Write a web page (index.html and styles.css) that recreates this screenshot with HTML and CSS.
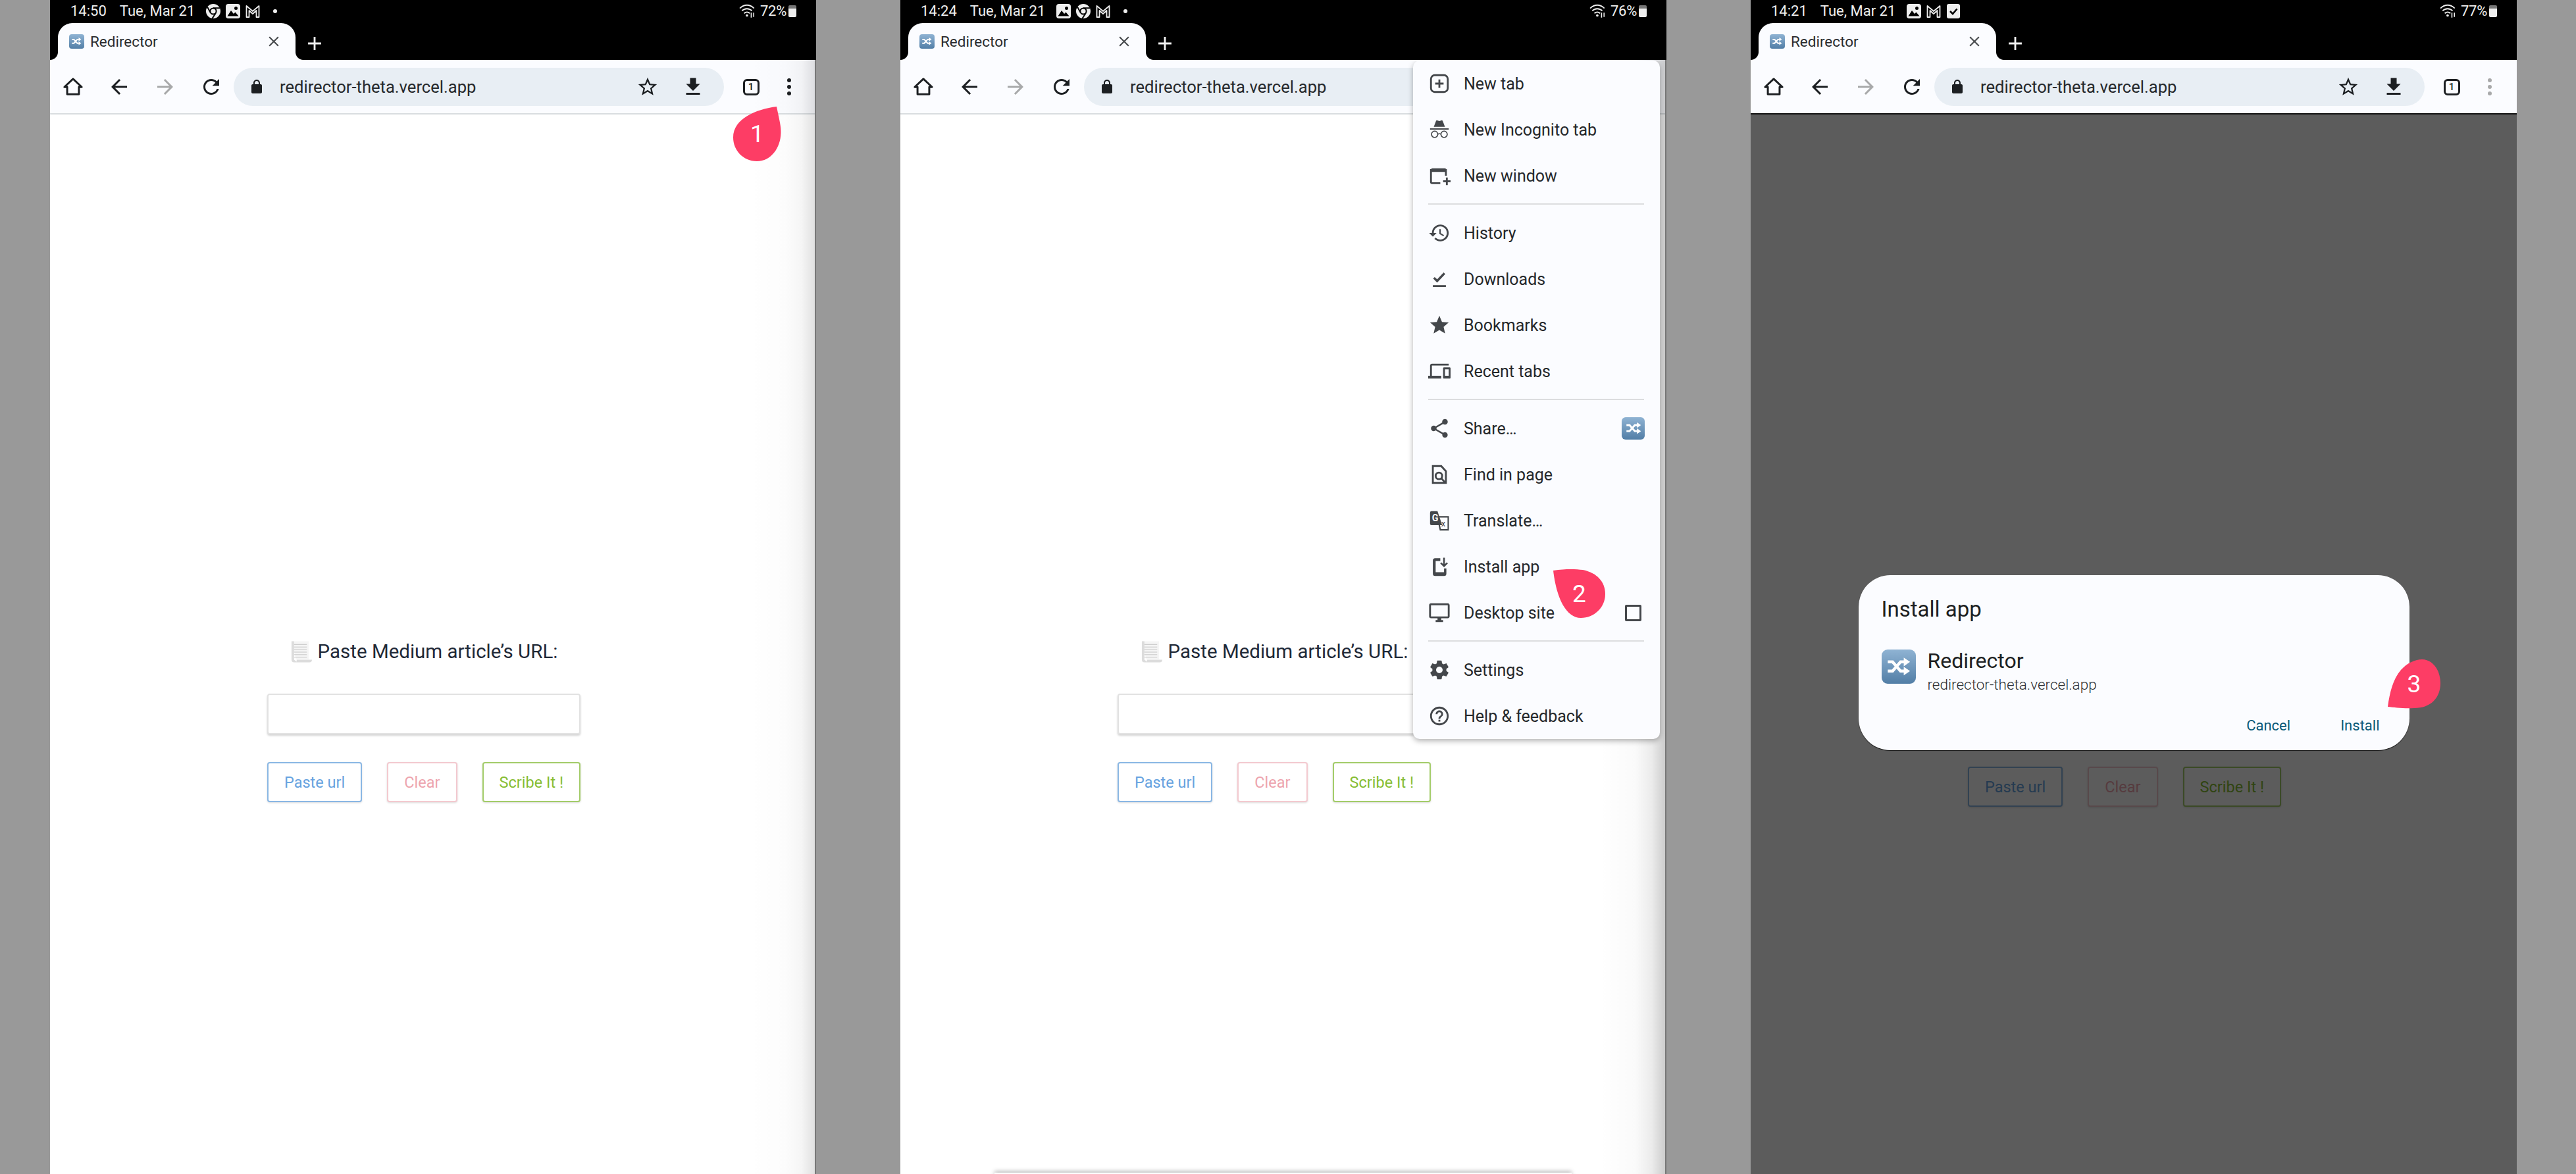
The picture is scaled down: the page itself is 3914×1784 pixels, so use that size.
FILE: index.html
```html
<!DOCTYPE html>
<html lang="en">
<head>
  <meta charset="UTF-8">
  <title>Redirector install steps</title>
  <link rel="stylesheet" href="styles.css">
</head>
<body>
  <!-- icons used by all three screens -->
  <svg class="sprite" xmlns="http://www.w3.org/2000/svg">
    <symbol id="i-home" viewBox="0 0 24 24"><path d="M12 3.500 2.700 12.200h3V20h12.600v-7.800h3z" fill="none" stroke="currentColor" stroke-width="2.100" stroke-linejoin="round"/></symbol>
    <symbol id="i-back" viewBox="0 0 24 24"><path d="M20 11H7.830l5.590-5.590L12 4l-8 8 8 8 1.410-1.410L7.830 13H20v-2z"/></symbol>
    <symbol id="i-forward" viewBox="0 0 24 24"><path d="M12 4l-1.410 1.410L16.170 11H4v2h12.170l-5.580 5.590L12 20l8-8z"/></symbol>
    <symbol id="i-reload" viewBox="0 0 24 24"><path d="M17.650 6.350C16.200 4.900 14.210 4 12 4c-4.420 0-7.990 3.580-7.990 8s3.570 8 7.990 8c3.730 0 6.840-2.550 7.730-6h-2.080c-.82 2.330-3.040 4-5.650 4-3.310 0-6-2.690-6-6s2.690-6 6-6c1.660 0 3.140.69 4.220 1.780L13 11h7V4l-2.350 2.350z"/></symbol>
    <symbol id="i-lock" viewBox="0 0 24 24"><path d="M18 8h-1V6c0-2.760-2.240-5-5-5S7 3.240 7 6v2H6c-1.100 0-2 .9-2 2v10c0 1.100.9 2 2 2h12c1.100 0 2-.9 2-2V10c0-1.100-.9-2-2-2zM9 6c0-1.660 1.340-3 3-3s3 1.340 3 3v2H9V6z"/></symbol>
    <symbol id="i-star-line" viewBox="0 0 24 24"><path d="M22 9.240l-7.190-.62L12 2 9.190 8.630 2 9.240l5.460 4.730L5.820 21 12 17.270 18.180 21l-1.630-7.030L22 9.240zM12 15.400l-3.760 2.270 1-4.280-3.320-2.880 4.380-.38L12 6.100l1.710 4.040 4.380.38-3.320 2.880 1 4.280L12 15.400z"/></symbol>
    <symbol id="i-download" viewBox="0 0 24 24"><path d="M19 9h-4V3H9v6H5l7 7 7-7zM5 18v2h14v-2H5z"/></symbol>
    <symbol id="i-close" viewBox="0 0 24 24"><path d="M19 6.410L17.590 5 12 10.590 6.410 5 5 6.410 10.590 12 5 17.590 6.410 19 12 13.410 17.590 19 19 17.590 13.410 12z"/></symbol>
    <symbol id="i-plus" viewBox="0 0 24 24"><path d="M19 13h-6v6h-2v-6H5v-2h6V5h2v6h6v2z"/></symbol>
    <symbol id="i-shuffle" viewBox="0 0 24 24"><path d="M2.500 8h4.200l7 8h3.300M2.500 16h4.200l7-8h3.300" fill="none" stroke="#fff" stroke-width="2.600"/><path d="M16.500 4.200 22 8l-5.500 3.800zM16.500 12.200 22 16l-5.500 3.800z" fill="#fff"/></symbol>

    <symbol id="s-chrome" viewBox="0 0 24 24"><circle cx="12" cy="12" r="11" fill="#eee"/><circle cx="12" cy="12" r="4.600" fill="#eee" stroke="#000" stroke-width="2"/><path d="M12 7.200h10M8 14.500 3 5.500M15.800 15 10.500 23" stroke="#000" stroke-width="2" fill="none"/></symbol>
    <symbol id="s-image" viewBox="0 0 24 24"><rect x="1" y="1" width="22" height="22" rx="4" fill="#eee"/><circle cx="16.500" cy="7.500" r="2.500"/><path d="M3.500 19.500 9 11l4 5 2.500-2.500 5 6z"/></symbol>
    <symbol id="s-gmail" viewBox="0 0 24 24"><path d="M2.500 21V4l9.500 8 9.500-8v17h-4V11l-5.500 5-5.500-5v10z" fill="none" stroke="#eee" stroke-width="1.800" stroke-linejoin="round"/></symbol>
    <symbol id="s-check" viewBox="0 0 24 24"><rect x="2" y="1" width="20" height="22" rx="3" fill="#eee"/><path d="m7 12 4 4 6.500-7.500" fill="none" stroke="#000" stroke-width="2.600"/></symbol>
    <symbol id="s-wifi" viewBox="0 0 24 24"><g fill="none" stroke="#eee" stroke-width="1.700"><path d="M1 8c6-6 14-6 20 0M4 11.500c4-4 10-4 14 0M7 15c2.500-2.200 5.500-2.200 8 0"/></g><circle cx="11" cy="18" r="1.700" fill="#eee"/><path d="M17 14v7M20.500 20v-6" stroke="#eee" stroke-width="1.500"/></symbol>

    <symbol id="m-newtab" viewBox="0 0 24 24"><rect x="3" y="3" width="18" height="18" rx="4" fill="none" stroke="currentColor" stroke-width="2"/><path d="M12 7.500v9M7.500 12h9" stroke="currentColor" stroke-width="2"/></symbol>
    <symbol id="m-incognito" viewBox="0 0 24 24"><path d="M17.060 13c-1.860 0-3.420 1.330-3.820 3.100-.95-.41-1.820-.3-2.480-.01C10.350 14.310 8.790 13 6.940 13 4.770 13 3 14.790 3 17s1.770 4 3.940 4c2.060 0 3.740-1.620 3.900-3.680.34-.24 1.230-.69 2.320.02.18 2.050 1.840 3.660 3.900 3.660 2.170 0 3.940-1.790 3.940-4s-1.770-4-3.940-4zM6.940 19.860c-1.560 0-2.810-1.280-2.810-2.860s1.260-2.860 2.810-2.860c1.560 0 2.810 1.280 2.810 2.860s-1.250 2.860-2.810 2.860zm10.120 0c-1.560 0-2.810-1.280-2.810-2.860s1.250-2.860 2.810-2.860 2.820 1.280 2.820 2.860-1.270 2.860-2.820 2.860zM22 10.500H2V12h20v-1.500zm-6.470-7.870c-.22-.49-.78-.75-1.310-.58L12 2.790l-2.230-.74-.05-.01c-.53-.15-1.090.13-1.290.64L6 9h12l-2.440-6.320-.03-.05z"/></symbol>
    <symbol id="m-window" viewBox="0 0 24 24"><path d="M13 20H4.500A1.500 1.500 0 0 1 3 18.500V6h16v6" fill="none" stroke="currentColor" stroke-width="2"/><path d="M3 5.500A1.500 1.500 0 0 1 4.500 4H18a1 1 0 0 1 1 1v3H3zM19 14h2v3h3v2h-3v3h-2v-3h-3v-2h3z"/></symbol>
    <symbol id="m-history" viewBox="0 0 24 24"><path d="M13 3c-4.970 0-9 4.030-9 9H1l3.890 3.890.07.14L9 12H6c0-3.870 3.130-7 7-7s7 3.130 7 7-3.130 7-7 7c-1.930 0-3.680-.79-4.940-2.060l-1.420 1.420C8.270 19.990 10.510 21 13 21c4.970 0 9-4.030 9-9s-4.030-9-9-9zm-1 5v5l4.280 2.540.72-1.210-3.500-2.080V8H12z"/></symbol>
    <symbol id="m-done" viewBox="0 0 24 24"><path d="M5 18.500h14v2H5zM9.600 15.800 5.300 11.500l1.700-1.700 2.600 2.600 7-7.400 1.700 1.700z"/></symbol>
    <symbol id="m-star" viewBox="0 0 24 24"><path d="M12 17.270L18.180 21l-1.640-7.030L22 9.240l-7.190-.61L12 2 9.190 8.630 2 9.240l5.460 4.730L5.820 21z"/></symbol>
    <symbol id="m-devices" viewBox="0 0 24 24"><path d="M4 6h18V4H4c-1.100 0-2 .9-2 2v11H0v3h14v-3H4V6zm19 2h-6c-.55 0-1 .45-1 1v10c0 .55.45 1 1 1h6c.55 0 1-.45 1-1V9c0-.55-.45-1-1-1zm-1 9h-4v-7h4v7z"/></symbol>
    <symbol id="m-share" viewBox="0 0 24 24"><path d="M18 16.080c-.76 0-1.440.3-1.960.77L8.910 12.700c.05-.23.09-.46.09-.7s-.04-.47-.09-.7l7.050-4.110c.54.5 1.250.81 2.040.81 1.660 0 3-1.340 3-3s-1.340-3-3-3-3 1.340-3 3c0 .24.04.47.09.7L8.040 9.810C7.500 9.310 6.790 9 6 9c-1.660 0-3 1.340-3 3s1.340 3 3 3c.79 0 1.500-.31 2.040-.81l7.120 4.160c-.05.21-.08.43-.08.650 0 1.610 1.310 2.920 2.920 2.920 1.610 0 2.920-1.310 2.920-2.920s-1.310-2.920-2.920-2.920z"/></symbol>
    <symbol id="m-find" viewBox="0 0 24 24"><g fill="none" stroke="currentColor" stroke-width="2"><path d="M5 3h9l5 5.500V21H5z"/><circle cx="11.500" cy="13.500" r="3.500"/><path d="m14 16 4 4.500"/></g></symbol>
    <symbol id="m-install" viewBox="0 0 24 24"><path d="M5 5.500A2.500 2.500 0 0 1 7.500 3H13v3H8v12h9v-4h2.500v5.500A2.500 2.500 0 0 1 17 22H7.500A2.500 2.500 0 0 1 5 19.500z"/><path d="M17 2.500v9M13.500 8l3.500 3.500L20.500 8" fill="none" stroke="currentColor" stroke-width="1.800"/></symbol>
    <symbol id="m-desktop" viewBox="0 0 24 24"><path d="M21 2H3c-1.100 0-2 .9-2 2v12c0 1.100.9 2 2 2h7v2H8v2h8v-2h-2v-2h7c1.100 0 2-.9 2-2V4c0-1.100-.9-2-2-2zm0 14H3V4h18v12z"/></symbol>
    <symbol id="m-settings" viewBox="0 0 24 24"><path d="M19.430 12.980c.04-.32.07-.64.07-.98s-.03-.66-.07-.98l2.110-1.650c.19-.15.24-.42.12-.64l-2-3.460c-.12-.22-.39-.3-.61-.22l-2.490 1c-.52-.4-1.080-.73-1.690-.98l-.38-2.650C14.460 2.180 14.250 2 14 2h-4c-.25 0-.46.18-.49.42l-.38 2.650c-.61.25-1.170.59-1.690.98l-2.490-1c-.23-.09-.49 0-.61.22l-2 3.460c-.13.22-.07.49.12.64l2.110 1.650c-.04.32-.07.65-.07.98s.03.66.07.98l-2.110 1.650c-.19.15-.24.42-.12.64l2 3.460c.12.22.39.3.61.22l2.490-1c.52.4 1.080.73 1.690.98l.38 2.650c.03.24.24.42.49.42h4c.25 0 .46-.18.49-.42l.38-2.650c.61-.25 1.170-.59 1.690-.98l2.490 1c.23.09.49 0 .61-.22l2-3.460c.12-.22.07-.49-.12-.64l-2.110-1.650zM12 15.500c-1.930 0-3.500-1.570-3.500-3.500s1.570-3.500 3.500-3.500 3.500 1.570 3.500 3.500-1.570 3.500-3.500 3.500z"/></symbol>
    <symbol id="m-help" viewBox="0 0 24 24"><path d="M11 18h2v-2h-2v2zm1-16C6.480 2 2 6.480 2 12s4.480 10 10 10 10-4.480 10-10S17.520 2 12 2zm0 18c-4.410 0-8-3.590-8-8s3.590-8 8-8 8 3.590 8 8-3.590 8-8 8zm0-14c-2.210 0-4 1.790-4 4h2c0-1.100.9-2 2-2s2 .9 2 2c0 2-3 1.750-3 5h2c0-2.250 3-2.500 3-5 0-2.210-1.790-4-4-4z"/></symbol>

    <symbol id="e-scroll" viewBox="0 0 34 36"><path d="M2 2h27v28H9z" fill="#f5f5f5"/><path d="M2 2v29a4 4 0 0 0 4 4h24a4 4 0 0 0 4-4H10v3L6 31V2z" fill="#dcdcdc"/><path d="M6 7h20M6 11h20M6 15h20M6 19h20M6 23h20M6 27h20" stroke="#c4c4c4" stroke-width="1"/></symbol>
  </svg>

  <!-- step 1 -->
  <section class="phone phone--lit phone--faint">
    <header class="chrome-top">
      <div class="status">
        <span class="status-time">14:50</span>
        <span class="status-date">Tue, Mar 21</span>
        <svg class="status-icon"><use href="#s-chrome"/></svg>
        <svg class="status-icon"><use href="#s-image"/></svg>
        <svg class="status-icon"><use href="#s-gmail"/></svg>
        <span class="status-dot"></span>
        <div class="status-right">
          <svg class="status-wifi"><use href="#s-wifi"/></svg>
          <span class="status-pct">72%</span>
          <span class="battery"></span>
        </div>
      </div>
      <div class="tabstrip">
        <div class="tab">
          <span class="app-icon app-icon--fav"><svg><use href="#i-shuffle"/></svg></span>
          <span class="tab-title">Redirector</span>
          <svg class="tab-close"><use href="#i-close"/></svg>
        </div>
        <svg class="tab-new"><use href="#i-plus"/></svg>
      </div>
    </header>
    <nav class="toolbar">
      <span class="tool"><svg class="ico ico-home"><use href="#i-home"/></svg></span>
      <span class="tool"><svg class="ico"><use href="#i-back"/></svg></span>
      <span class="tool tool--off"><svg class="ico"><use href="#i-forward"/></svg></span>
      <span class="tool"><svg class="ico"><use href="#i-reload"/></svg></span>
      <div class="omnibox">
        <svg class="ico-lock"><use href="#i-lock"/></svg>
        <span class="url">redirector-theta.vercel.app</span>
        <svg class="ico-star"><use href="#i-star-line"/></svg>
        <svg class="ico"><use href="#i-download"/></svg>
      </div>
      <span class="tool tool--end"><span class="tab-count">1</span></span>
      <span class="tool tool--end"><span class="dots"><i></i><i></i><i></i></span></span>
    </nav>
    <main class="page">
      <form class="form">
        <label class="form-label"><svg class="scroll"><use href="#e-scroll"/></svg> Paste Medium article’s URL:</label>
        <input class="form-input" type="text">
        <div class="form-btns">
          <button class="btn btn--blue" type="button">Paste url</button>
          <button class="btn btn--red" type="button">Clear</button>
          <button class="btn btn--green" type="button">Scribe It !</button>
        </div>
      </form>
    </main>
    <div class="pin pin--one">
      <svg viewBox="0 0 73 83"><path d="M66 0C70 20 73 30 72.500 40 72 62 58 83 36 83 15 83 0 66 0 47 0 18 35 4 66 0z"/></svg>
      <span>1</span>
    </div>
  </section>

  <!-- step 2 -->
  <section class="phone phone--lit">
    <header class="chrome-top">
      <div class="status">
        <span class="status-time">14:24</span>
        <span class="status-date">Tue, Mar 21</span>
        <svg class="status-icon"><use href="#s-image"/></svg>
        <svg class="status-icon"><use href="#s-chrome"/></svg>
        <svg class="status-icon"><use href="#s-gmail"/></svg>
        <span class="status-dot"></span>
        <div class="status-right">
          <svg class="status-wifi"><use href="#s-wifi"/></svg>
          <span class="status-pct">76%</span>
          <span class="battery"></span>
        </div>
      </div>
      <div class="tabstrip">
        <div class="tab">
          <span class="app-icon app-icon--fav"><svg><use href="#i-shuffle"/></svg></span>
          <span class="tab-title">Redirector</span>
          <svg class="tab-close"><use href="#i-close"/></svg>
        </div>
        <svg class="tab-new"><use href="#i-plus"/></svg>
      </div>
    </header>
    <nav class="toolbar">
      <span class="tool"><svg class="ico ico-home"><use href="#i-home"/></svg></span>
      <span class="tool"><svg class="ico"><use href="#i-back"/></svg></span>
      <span class="tool tool--off"><svg class="ico"><use href="#i-forward"/></svg></span>
      <span class="tool"><svg class="ico"><use href="#i-reload"/></svg></span>
      <div class="omnibox">
        <svg class="ico-lock"><use href="#i-lock"/></svg>
        <span class="url">redirector-theta.vercel.app</span>
      </div>
    </nav>
    <main class="page">
      <form class="form">
        <label class="form-label"><svg class="scroll"><use href="#e-scroll"/></svg> Paste Medium article’s URL:</label>
        <input class="form-input" type="text">
        <div class="form-btns">
          <button class="btn btn--blue" type="button">Paste url</button>
          <button class="btn btn--red" type="button">Clear</button>
          <button class="btn btn--green" type="button">Scribe It !</button>
        </div>
      </form>
      <div class="sheet-edge"></div>
    </main>
    <ul class="menu">
      <li class="menu-item"><svg class="menu-ico"><use href="#m-newtab"/></svg>New tab</li>
      <li class="menu-item"><svg class="menu-ico"><use href="#m-incognito"/></svg>New Incognito tab</li>
      <li class="menu-item"><svg class="menu-ico"><use href="#m-window"/></svg>New window</li>
      <li class="menu-sep"></li>
      <li class="menu-item"><svg class="menu-ico"><use href="#m-history"/></svg>History</li>
      <li class="menu-item"><svg class="menu-ico"><use href="#m-done"/></svg>Downloads</li>
      <li class="menu-item"><svg class="menu-ico"><use href="#m-star"/></svg>Bookmarks</li>
      <li class="menu-item"><svg class="menu-ico"><use href="#m-devices"/></svg>Recent tabs</li>
      <li class="menu-sep"></li>
      <li class="menu-item"><svg class="menu-ico"><use href="#m-share"/></svg>Share…<span class="app-icon app-icon--menu"><svg><use href="#i-shuffle"/></svg></span></li>
      <li class="menu-item"><svg class="menu-ico"><use href="#m-find"/></svg>Find in page</li>
      <li class="menu-item">
        <svg class="menu-ico" viewBox="0 0 24 24">
          <path d="M10 8h11.500v14H13z" fill="none" stroke="currentColor" stroke-width="1.500"/>
          <path d="M3.500 2H10l5 15H3.500A1.500 1.500 0 0 1 2 15.500v-12A1.500 1.500 0 0 1 3.500 2z"/>
          <text x="4" y="13" class="glyph-g">G</text>
          <text x="14" y="18.500" class="glyph-x">x</text>
        </svg>Translate…
      </li>
      <li class="menu-item"><svg class="menu-ico"><use href="#m-install"/></svg>Install app</li>
      <li class="menu-item"><svg class="menu-ico"><use href="#m-desktop"/></svg>Desktop site<span class="menu-check"></span></li>
      <li class="menu-sep"></li>
      <li class="menu-item"><svg class="menu-ico"><use href="#m-settings"/></svg>Settings</li>
      <li class="menu-item"><svg class="menu-ico"><use href="#m-help"/></svg>Help &amp; feedback</li>
    </ul>
    <div class="pin pin--two">
      <svg viewBox="0 0 79 74"><path d="M0 2C20-1 35 0 45 1 65 5 79 18 79 38 79 58 62 74 42 74 20 74 5 45 0 2z"/></svg>
      <span>2</span>
    </div>
  </section>

  <!-- step 3 -->
  <section class="phone">
    <header class="chrome-top">
      <div class="status">
        <span class="status-time">14:21</span>
        <span class="status-date">Tue, Mar 21</span>
        <svg class="status-icon"><use href="#s-image"/></svg>
        <svg class="status-icon"><use href="#s-gmail"/></svg>
        <svg class="status-icon"><use href="#s-check"/></svg>
        <div class="status-right">
          <svg class="status-wifi"><use href="#s-wifi"/></svg>
          <span class="status-pct">77%</span>
          <span class="battery"></span>
        </div>
      </div>
      <div class="tabstrip">
        <div class="tab">
          <span class="app-icon app-icon--fav"><svg><use href="#i-shuffle"/></svg></span>
          <span class="tab-title">Redirector</span>
          <svg class="tab-close"><use href="#i-close"/></svg>
        </div>
        <svg class="tab-new"><use href="#i-plus"/></svg>
      </div>
    </header>
    <nav class="toolbar toolbar--dimmed">
      <span class="tool"><svg class="ico ico-home"><use href="#i-home"/></svg></span>
      <span class="tool"><svg class="ico"><use href="#i-back"/></svg></span>
      <span class="tool tool--off"><svg class="ico"><use href="#i-forward"/></svg></span>
      <span class="tool"><svg class="ico"><use href="#i-reload"/></svg></span>
      <div class="omnibox">
        <svg class="ico-lock"><use href="#i-lock"/></svg>
        <span class="url">redirector-theta.vercel.app</span>
        <svg class="ico-star"><use href="#i-star-line"/></svg>
        <svg class="ico"><use href="#i-download"/></svg>
      </div>
      <span class="tool tool--end"><span class="tab-count">1</span></span>
      <span class="tool tool--end tool--off"><span class="dots"><i></i><i></i><i></i></span></span>
    </nav>
    <main class="page page--low">
      <form class="form">
        <label class="form-label"><svg class="scroll"><use href="#e-scroll"/></svg> Paste Medium article’s URL:</label>
        <input class="form-input" type="text">
        <div class="form-btns">
          <button class="btn btn--blue" type="button">Paste url</button>
          <button class="btn btn--red" type="button">Clear</button>
          <button class="btn btn--green" type="button">Scribe It !</button>
        </div>
      </form>
      <div class="scrim">
        <div class="dialog">
          <h2 class="dialog-title">Install app</h2>
          <div class="dialog-app">
            <span class="app-icon app-icon--big"><svg><use href="#i-shuffle"/></svg></span>
            <div class="dialog-text">
              <div class="dialog-name">Redirector</div>
              <div class="dialog-url">redirector-theta.vercel.app</div>
            </div>
          </div>
          <div class="dialog-actions">
            <span class="dialog-btn">Cancel</span>
            <span class="dialog-btn">Install</span>
          </div>
        </div>
      </div>
    </main>
    <div class="pin pin--three">
      <svg viewBox="0 0 80 75"><path d="M0 72C3 50 8 30 20 16 30 5 42 0 52 0 68 0 80 16 80 36 80 58 66 74 40 74 25 75 10 73 0 72z"/></svg>
      <span>3</span>
    </div>
  </section>
</body>
</html>
```

FILE: styles.css
```css
* {
  box-sizing: border-box;
}

html, body {
  margin: 0;
  height: 1784px;
  overflow: hidden;
}

body {
  display: flex;
  gap: 128px;
  padding-left: 76px;
  background: #999;
  font-family: Roboto, "Liberation Sans", sans-serif;
  color: #202124;
}

.sprite {
  position: absolute;
  width: 0;
  height: 0;
}

.phone {
  position: relative;
  display: flex;
  flex-direction: column;
  width: 1164px;
  height: 1784px;
  background: #fff;
  overflow: hidden;
}

/* the soft shade down the right edge on the two light screens */
.phone--lit::after {
  content: "";
  position: absolute;
  top: 91px;
  right: 0;
  bottom: 0;
  width: 100px;
  background: linear-gradient(to right, rgba(0,0,0,0), rgba(0,0,0,.02) 55%, rgba(0,0,0,.08) 80%, rgba(0,0,0,.2));
  border-right: 2px solid #777;
  pointer-events: none;
}

.phone--faint::after {
  background: linear-gradient(to right, rgba(0,0,0,0), rgba(0,0,0,.01) 55%, rgba(0,0,0,.04) 80%, rgba(0,0,0,.12));
}

/* status bar + tabs */
.chrome-top {
  height: 91px;
  background: #000;
  flex: none;
}

.status {
  display: flex;
  align-items: center;
  height: 33px;
  padding: 0 30px 0 31px;
  font-size: 22px;
  color: #eee;
}

.status-date {
  margin-left: 20px;
  margin-right: 16px;
}

.status-icon {
  width: 24px;
  height: 24px;
  margin-right: 6px;
}

.status-dot {
  width: 6px;
  height: 6px;
  margin-left: 13px;
  border-radius: 50%;
  background: #eee;
}

.status-right {
  display: flex;
  align-items: center;
  margin-left: auto;
}

.status-wifi {
  width: 26px;
  height: 26px;
  margin-right: 6px;
}

.status-pct {
  letter-spacing: -.3px;
}

.battery {
  width: 12px;
  height: 18px;
  margin-left: 3px;
  border-radius: 2px;
  background: linear-gradient(to bottom, #777 28%, #eee 28%);
}

.tabstrip {
  display: flex;
  align-items: flex-end;
  height: 58px;
  padding-left: 12px;
}

.tab {
  position: relative;
  display: flex;
  align-items: center;
  width: 361px;
  height: 56px;
  padding: 0 20px 0 17px;
  border-radius: 22px 22px 0 0;
  background: #fbfcff;
}

/* the little flares at the foot of the tab */
.tab::before,
.tab::after {
  content: "";
  position: absolute;
  bottom: 0;
  width: 12px;
  height: 12px;
}

.tab::before {
  left: -12px;
  background: radial-gradient(circle at 0 0, #000 11.5px, #fbfcff 12.5px);
}

.tab::after {
  right: -12px;
  background: radial-gradient(circle at 100% 0, #000 11.5px, #fbfcff 12.5px);
}

.tab-title {
  margin-left: 9px;
  font-size: 22.500px;
  color: #2a2c2f;
}

.tab-close {
  width: 26px;
  height: 26px;
  margin-left: auto;
  fill: #4a4d50;
}

.tab-new {
  width: 34px;
  height: 34px;
  margin: 0 0 8px 12px;
  fill: #f2f2f2;
}

/* the blue shuffle icon of the app */
.app-icon {
  display: flex;
  align-items: center;
  justify-content: center;
  flex: none;
  background: linear-gradient(to bottom, #8fb3d3, #527ea6);
}

.app-icon svg {
  width: 80%;
  height: 80%;
}

.app-icon--fav {
  width: 23px;
  height: 22px;
  border-radius: 4px;
}

.app-icon--menu {
  width: 35px;
  height: 34px;
  margin-left: auto;
  border-radius: 6px;
}

.app-icon--big {
  width: 52px;
  height: 52px;
  border-radius: 9px;
}

/* toolbar */
.toolbar {
  display: flex;
  align-items: center;
  flex: none;
  height: 83px;
  padding-top: 1px;
  border-bottom: 2px solid #d9dde0;
  background: #fbfcff;
  color: #1c1f22;
  fill: currentColor;
}

.toolbar--dimmed {
  border-bottom-color: #111;
}

.tool {
  display: flex;
  align-items: center;
  justify-content: center;
  flex: none;
  width: 70px;
}

.tool--off {
  color: #a8a9aa;
}

.tool--end {
  width: 58px;
}

.ico {
  width: 36px;
  height: 36px;
}

.ico-home {
  width: 34px;
  height: 34px;
}

.omnibox {
  display: flex;
  align-items: center;
  flex: none;
  width: 745px;
  height: 58px;
  margin: 0 12px 0 -1px;
  padding: 0 29px 0 23px;
  border-radius: 29px;
  background: #e8eef4;
}

.ico-lock {
  width: 24px;
  height: 24px;
}

.url {
  margin-left: 23px;
  font-size: 25.600px;
  color: #26292c;
}

.ico-star {
  width: 34px;
  height: 34px;
  margin-left: auto;
  margin-right: 34px;
}

.tab-count {
  display: flex;
  align-items: center;
  justify-content: center;
  width: 25px;
  height: 25px;
  border: 3px solid currentColor;
  border-radius: 6px;
  font-size: 15px;
  font-weight: 500;
}

.dots {
  display: flex;
  flex-direction: column;
  gap: 4px;
}

.dots i {
  width: 6px;
  height: 6px;
  border-radius: 50%;
  background: currentColor;
}

/* the web page */
.page {
  position: relative;
  flex: 1;
  padding: 798px 0 0 330px;
}

.page--low {
  padding-top: 805px;
}

.form {
  width: 476px;
}

.form-label {
  display: flex;
  align-items: center;
  justify-content: center;
  gap: 9px;
  height: 36px;
  font-size: 29.500px;
  color: #1f2937;
  white-space: nowrap;
}

.scroll {
  width: 33px;
  height: 36px;
}

.form-input {
  display: block;
  width: 100%;
  height: 62px;
  margin-top: 46px;
  border: 2px solid #e2e2e2;
  border-radius: 4px;
  background: #fff;
  box-shadow: 0 2px 3px rgba(0,0,0,.18);
}

.form-btns {
  display: flex;
  justify-content: space-between;
  margin-top: 42px;
}

.btn {
  height: 61px;
  padding: 0 24px;
  border: 2px solid;
  border-radius: 4px;
  background: #fff;
  font-family: inherit;
  font-size: 23.500px;
  box-shadow: 0 1px 3px rgba(0,0,0,.15);
}

.btn--blue {
  border-color: #8ab7e4;
  color: #67a3e0;
}

.btn--red {
  border-color: #f3c9cf;
  color: #eda4ae;
}

.btn--green {
  border-color: #a3cc69;
  color: #86bd33;
}

.sheet-edge {
  position: absolute;
  left: 143px;
  bottom: -4px;
  width: 877px;
  height: 6px;
  background: #fff;
  box-shadow: 0 -2px 6px rgba(0,0,0,.3);
}

/* chrome overflow menu */
.menu {
  position: absolute;
  z-index: 2;
  top: 92px;
  right: 10px;
  width: 375px;
  margin: 0;
  padding: 0;
  list-style: none;
  border-radius: 10px;
  background: #fbfcff;
  box-shadow: 0 3px 8px rgba(0,0,0,.3);
}

.menu-item {
  display: flex;
  align-items: center;
  height: 70px;
  padding: 0 23px;
  font-size: 25px;
  color: #25282b;
}

.menu-ico {
  width: 34px;
  height: 34px;
  margin-right: 20px;
  flex: none;
  color: #44474b;
  fill: currentColor;
}

.glyph-g {
  font-family: Roboto, sans-serif;
  font-size: 10px;
  font-weight: 700;
  fill: #fff;
}

.glyph-x {
  font-family: Roboto, sans-serif;
  font-size: 9px;
  fill: #44474b;
}

.menu-check {
  width: 25px;
  height: 25px;
  margin: 0 5px 0 auto;
  border: 3px solid #44474b;
  border-radius: 2px;
}

.menu-sep {
  height: 2px;
  margin: 7px 24px 8px 23px;
  background: #dcdddf;
}

/* dimmed page and install dialog */
.scrim {
  position: absolute;
  inset: 0;
  display: flex;
  justify-content: center;
  align-items: flex-start;
  padding-top: 700px;
  background: rgba(0,0,0,.64);
}

.dialog {
  width: 837px;
  height: 266px;
  padding: 0 35px;
  border-radius: 48px;
  background: #fbfcff;
  box-shadow: 0 1px 1px #111;
}

.dialog-title {
  margin: 32px 0 0;
  font-size: 33px;
  line-height: 40px;
  font-weight: 400;
  color: #1d1f22;
}

.dialog-app {
  display: flex;
  gap: 18px;
  margin-top: 41px;
}

.dialog-text {
  margin-top: -3px;
}

.dialog-name {
  font-size: 32px;
  line-height: 40px;
  color: #1d1f22;
}

.dialog-url {
  margin-top: 2px;
  font-size: 22.500px;
  line-height: 28px;
  font-weight: 300;
  color: #2b2e31;
}

.dialog-actions {
  display: flex;
  justify-content: flex-end;
  gap: 76px;
  margin: 36px 10px 0 0;
}

.dialog-btn {
  font-size: 22px;
  color: #0a5a78;
}

/* numbered step drops */
.pin {
  position: absolute;
  z-index: 3;
  display: flex;
  align-items: center;
  justify-content: center;
  font-size: 37px;
  color: #fff;
}

.pin svg {
  position: absolute;
  inset: 0;
  width: 100%;
  height: 100%;
  fill: #fd3d65;
}

.pin span {
  position: relative;
}

.pin--one {
  left: 1038px;
  top: 162px;
  width: 73px;
  height: 83px;
}

.pin--two {
  left: 992px;
  top: 865px;
  width: 79px;
  height: 74px;
}

.pin--three {
  left: 968px;
  top: 1002px;
  width: 80px;
  height: 75px;
}
```
